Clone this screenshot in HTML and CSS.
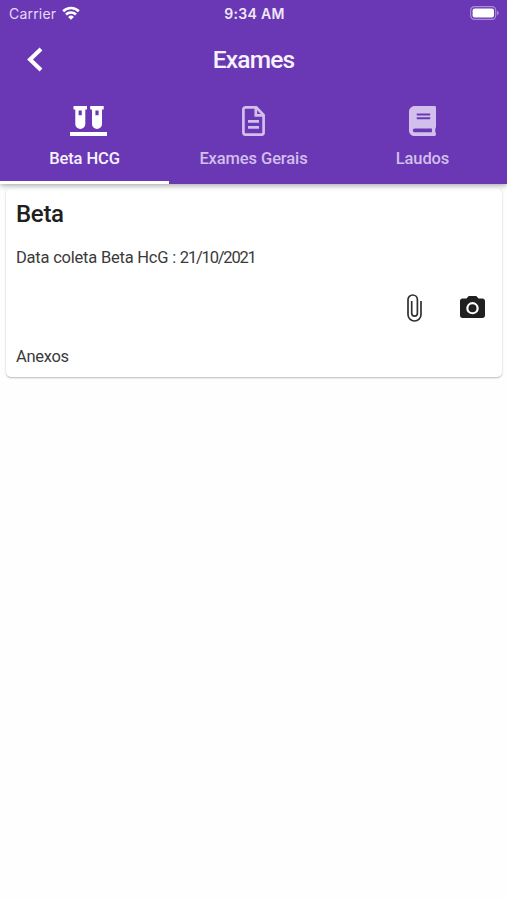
FILE: index.html
```
<!DOCTYPE html>
<html lang="pt-BR">
<head>
    <meta charset="UTF-8">
    <meta name="viewport" content="width=device-width, initial-scale=1.0">
    <title>Exames</title>
    <link rel="stylesheet" href="styles.css">
</head>
<body>
    <header class="header">
        <div class="status-bar">
            <div class="carrier">
                <span>Carrier</span>
                <svg class="wifi" viewBox="0 0 18 14">
                    <path d="M1.2 5.2a11.2 11.2 0 0 1 15.6 0" />
                    <path d="M4 8.5a7.1 7.1 0 0 1 10 0" />
                    <path class="dot" d="M9 13.8L6.1 10.9a4.1 4.1 0 0 1 5.8 0z" />
                </svg>
            </div>
            <span class="time">9:34 AM</span>
            <svg class="battery" viewBox="0 0 30 14">
                <rect class="shell" x="0.7" y="0.7" width="25" height="12.6" rx="3.6" />
                <rect x="2.6" y="2.5" width="21.4" height="9" rx="2" />
                <path class="tip" d="M27 4.8c2.4.8 2.4 3.6 0 4.4z" />
            </svg>
        </div>
        <div class="title-bar">
            <svg class="back" viewBox="0 0 16 25">
                <path d="M14 2L3 12.5L14 23" />
            </svg>
            <h1>Exames</h1>
        </div>
        <nav class="tabs">
            <a class="tab active">
                <svg class="icon-tubes" viewBox="0 0 37 30">
                    <path fill-rule="evenodd" d="M3.5 0H17v3.6h-1.7V18a5 5 0 0 1-10 0V3.6H3.5zM8.6 4.4v4.9h3.2V4.4z" />
                    <path fill-rule="evenodd" d="M20.2 0h13.5v3.6H32V18a5 5 0 0 1-10 0V3.6h-1.8zM25.4 4.4v4.9h3.2V4.4z" />
                    <path d="M0 26h37v4H0z" />
                </svg>
                <span>Beta HCG</span>
            </a>
            <a class="tab">
                <svg class="icon-doc" viewBox="0 0 23 30">
                    <path class="line" d="M3 1.4h11.3L21.6 9v17.6a2 2 0 0 1-2 2H3.4a2 2 0 0 1-2-2V3.4a2 2 0 0 1 2-2zM13.8 1.6v7.8h7.6M6 15.4h11M6 21.3h11" />
                </svg>
                <span>Exames Gerais</span>
            </a>
            <a class="tab">
                <svg class="icon-book" viewBox="0 0 448 512" preserveAspectRatio="none">
                    <path d="M448 360V24c0-13.3-10.7-24-24-24H96C43 0 0 43 0 96v320c0 53 43 96 96 96h328c13.3 0 24-10.7 24-24v-16c0-7.5-3.5-14.3-8.9-18.7-4.2-15.4-4.2-59.3 0-74.7 5.4-4.3 8.9-11.1 8.9-18.6zM128 134c0-3.3 2.7-6 6-6h212c3.3 0 6 2.7 6 6v20c0 3.3-2.7 6-6 6H134c-3.3 0-6-2.7-6-6v-20zm0 64c0-3.3 2.7-6 6-6h212c3.3 0 6 2.7 6 6v20c0 3.3-2.7 6-6 6H134c-3.3 0-6-2.7-6-6v-20zm253.4 250H96c-17.700 0-32-14.300-32-32 0-17.600 14.400-32 32-32h285.400c-1.900 17.100-1.900 46.900 0 64z" />
                </svg>
                <span>Laudos</span>
            </a>
        </nav>
    </header>

    <main class="card">
        <h2>Beta</h2>
        <p class="date">Data coleta Beta HcG : <span>21/10/2021</span></p>
        <div class="actions">
            <svg class="icon-clip" viewBox="0 0 15 28">
                <path d="M14 7v13.5a6.5 6.5 0 0 1-13 0V5.7a4.7 4.7 0 0 1 9.4 0V19.3a2.8 2.8 0 0 1-5.7 0V7" />
            </svg>
            <svg class="icon-camera" viewBox="2 2 20 18" preserveAspectRatio="none">
                <path fill-rule="evenodd" d="M9 2L7.17 4H4c-1.1 0-2 .9-2 2v12c0 1.1.9 2 2 2h16c1.1 0 2-.9 2-2V6c0-1.1-.9-2-2-2h-3.17L15 2H9zm3 15a5 5 0 1 1 0-10 5 5 0 0 1 0 10z" />
                <circle cx="12" cy="12" r="3.2" />
            </svg>
        </div>
        <p>Anexos</p>
    </main>
</body>
</html>
```
FILE: styles.css
```
* { box-sizing: border-box; }
body { margin: 0; min-height: 100vh; background: #fefefe; color: #202020; font-family: Roboto, "Liberation Sans", sans-serif; }
h1, h2, p { margin: 0; }
svg { display: block; fill: currentColor; }

.header { position: relative; z-index: 1; height: 184px; background: #6a38b5; color: #fff; box-shadow: 0 1px 6px rgba(0, 0, 0, 0.4); }

.status-bar { display: grid; grid-template-columns: 1fr auto 1fr; align-items: center; height: 28px; padding: 0 7px 0 9px; font-family: Inter, sans-serif; font-size: 14px; line-height: 28px; }
.carrier { display: flex; align-items: center; gap: 6px; color: #e6daf5; letter-spacing: 0.2px; }
.wifi { width: 18px; height: 14px; margin-top: -2px; color: #fff; fill: none; stroke: currentColor; stroke-width: 2.6; }
.wifi .dot { fill: currentColor; stroke: none; }
.time { font-size: 14px; font-weight: 600; color: #f0e8fa; letter-spacing: 0.3px; }
.battery { width: 30px; height: 14px; margin-top: -2px; justify-self: end; }
.battery .shell { fill: none; stroke: #a98bd6; stroke-width: 1.2; }
.battery .tip { fill: #a98bd6; }

.title-bar { display: grid; grid-template-columns: 1fr auto 1fr; align-items: center; height: 62px; padding: 0 27px; }
.back { width: 16px; height: 25px; fill: none; stroke: #fff; stroke-width: 4; }
h1 { font-size: 24.5px; font-weight: 500; color: #f8f2ff; letter-spacing: -0.8px; }

.tabs { display: grid; grid-template-columns: repeat(3, 1fr); height: 94px; }
.tab { display: flex; flex-direction: column; align-items: center; padding-top: 16px; color: #d2bfeb; font-size: 16.5px; font-weight: 500; line-height: 20px; letter-spacing: -0.1px; border-bottom: 3px solid transparent; }
.tab svg { height: 30px; margin-bottom: 13px; }
.tab.active { color: #f8f2ff; border-bottom-color: #fff; }
.icon-tubes { width: 37px; margin-left: 8px; color: #fff; }
.icon-doc { width: 23px; }
.icon-doc .line { fill: none; stroke: currentColor; stroke-width: 2.7; }
.icon-book { width: 27px; }

.card { height: 189px; margin: 4px 5px 0 6px; padding: 12px 17px 0 10px; background: #fff; border-radius: 5px; box-shadow: 0 1px 2px rgba(0, 0, 0, 0.28); font-size: 16.5px; letter-spacing: -0.3px; }
.card h2 { font-size: 24px; font-weight: 500; line-height: 28px; }
.card p { color: #3a3a3a; line-height: 20px; }
.card .date { margin-top: 20px; letter-spacing: -0.22px; }
.date span { letter-spacing: -1.2px; }
.actions { display: flex; justify-content: flex-end; align-items: center; gap: 38px; height: 28px; margin: 26px 0 25px; }
.icon-clip { width: 15px; height: 28px; fill: none; stroke: #303030; stroke-width: 1.7; }
.icon-camera { width: 25px; height: 22px; margin-bottom: 2px; }
```
